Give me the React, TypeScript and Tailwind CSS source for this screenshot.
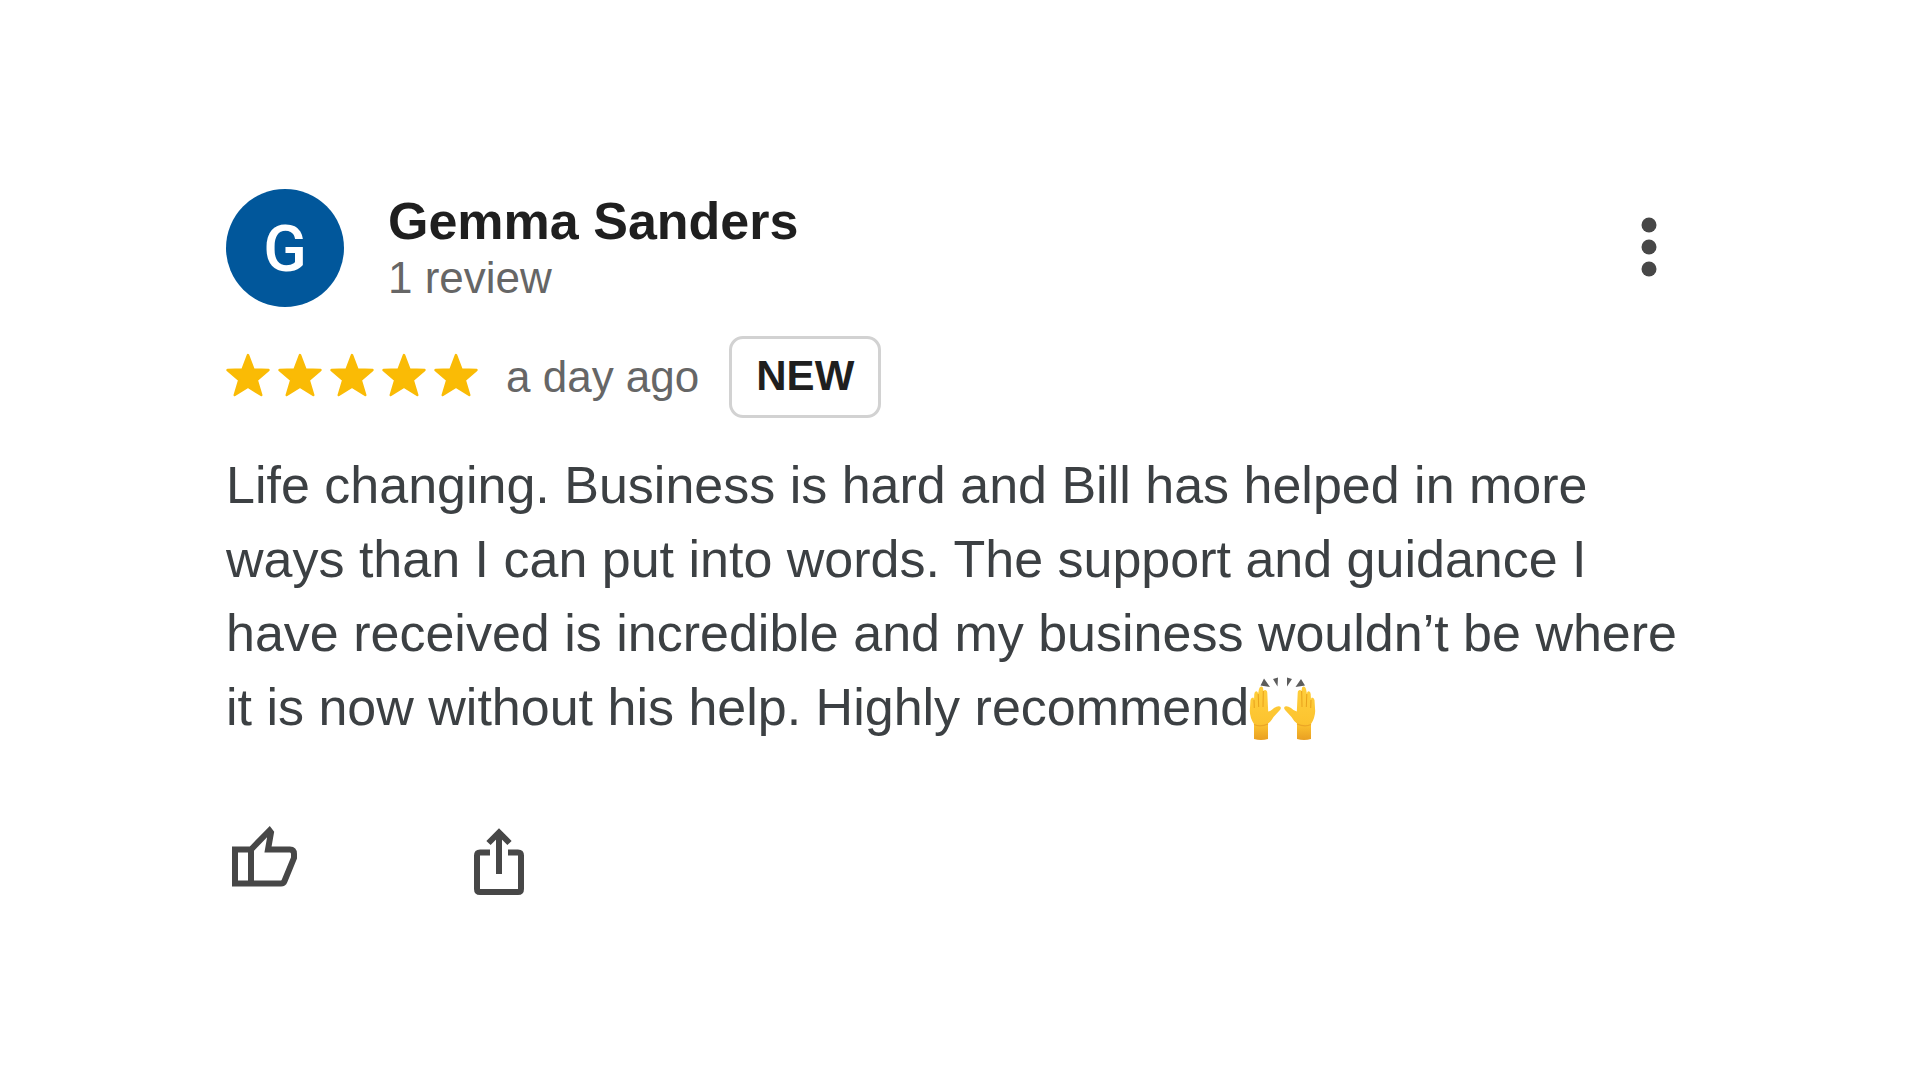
const Star = () => (
  <svg viewBox="0 0 44 44" className="h-11 w-11 fill-[#fabb05]" aria-hidden="true">
    <path
      d="M22 2L27.500 16.500L42.500 17L30.800 27L35.300 42L22 33.800L8.700 42L13.200 27L1.500 17L16.500 16.500Z"
      stroke="#fabb05"
      strokeWidth="2.400"
      strokeLinejoin="round"
    />
  </svg>
);

const Hand = () => (
  <>
    <path
      d="M5 62V47Q1 41 .8 34L1.500 23Q2 20.500 4 20.500Q5.200 20.500 5 23L5.300 17Q5.600 14 7.500 14.200Q9.200 14.500 9 17L10 12Q10.600 9.200 12.500 9.400Q14.300 9.700 14.200 12L14.400 14Q15.500 12.500 17 13.200Q18.400 14 18.300 16L19.200 34.500Q22 34 25 31Q28.500 28.700 31 29.500Q33 31 30.500 33.500L24.500 40Q22 44.500 19 46.500V62Q12 64 5 62Z"
      fill="url(#skin)"
    />
    <path d="M5 23L5.300 31M9.200 17L9.700 30M14.300 14L14 30" stroke="#e9a21b" strokeWidth="1" fill="none" />
    <path d="M5 47.500Q11 50.500 19 47" stroke="#eba626" strokeWidth="1.200" fill="none" />
  </>
);

const RaisedHands = () => (
  <svg viewBox="0 0 68 64" role="img" aria-label="Raising hands" className="inline-block h-16 w-[68px] align-[-16px]">
    <defs>
      <linearGradient id="skin" x1="0" y1="0" x2="0" y2="1">
        <stop offset="0" stopColor="#ffcf3d" />
        <stop offset=".7" stopColor="#fcc32f" />
        <stop offset="1" stopColor="#e99f22" />
      </linearGradient>
    </defs>
    <Hand />
    <g transform="translate(67 0) scale(-1 1)"><Hand /></g>
    <path d="M15 1.500L21 10L11.500 8.500ZM24 2L29 .500L28.500 9.500ZM38 .500L43 2L38 9.500ZM52 2L56 8.500L46.500 10Z" fill="#5c5c5c" />
  </svg>
);

export default function App() {
  return (
    <main className="min-h-screen bg-white px-[226px] pt-[189px] pb-20 font-['Liberation_Sans',Arial,sans-serif]">
      <article>
        <header className="flex items-center">
          <div className="flex size-[118px] items-center justify-center rounded-full bg-[#01579b] pt-1 font-['Roboto',sans-serif] text-[64px] font-medium text-white">G</div>
          <div className="ml-11 flex-1">
            <h1 className="text-[52px] leading-[60px] font-bold text-[#1f1f1f]">Gemma Sanders</h1>
            <p className="text-[44px] leading-[54px] text-[#666]">1 review</p>
          </div>
          <button aria-label="More options" className="mr-[37px] pb-0.5">
            <svg viewBox="0 0 16 60" className="h-[60px] w-4 fill-[#474747]">
              <circle cx="8" cy="8" r="7.500" />
              <circle cx="8" cy="30" r="7.500" />
              <circle cx="8" cy="52" r="7.500" />
            </svg>
          </button>
        </header>
        <div className="mt-[29px] flex items-center">
          <div role="img" aria-label="5 stars" className="flex gap-2 pb-1">
            <Star /><Star /><Star /><Star /><Star />
          </div>
          <span className="ml-7 text-[44px] text-[#666]">a day ago</span>
          <span className="ml-[30px] flex h-[82px] items-center rounded-[14px] border-[3px] border-[#d2d2d2] px-6 pb-1 text-[42px] font-bold text-[#1f1f1f]">NEW</span>
        </div>
        <p className="mt-[30px] text-[52px] leading-[74px] text-[#3c4043]">
          Life changing. Business is hard and Bill has helped in more<br />
          ways than I can put into words. The support and guidance I<br />
          have received is incredible and my business wouldn’t be where<br />
          it is now without his help. Highly recommend<RaisedHands />
        </p>
        <footer className="mt-20 flex items-center gap-[176px] px-1.5">
          <button aria-label="Like">
            <svg viewBox="0 0 66 72" className="h-[72px] w-[66px]" fill="none" stroke="#474747" strokeWidth="6">
              <path d="M3 25.500H19L37.500 6.500L39 8.500L36 25.500H58Q62 25.500 62 30V34L52.500 57Q51.500 59.500 49 59.500H3ZM19 25.500V59.500" />
            </svg>
          </button>
          <button aria-label="Share">
            <svg viewBox="0 0 50 72" className="h-[72px] w-[50px]" fill="none" stroke="#474747" strokeWidth="6">
              <path d="M16 28.500H6Q3 28.500 3 31.500V65Q3 68 6 68H44Q47 68 47 65V31.500Q47 28.500 44 28.500H34M25 50V9M14.500 19L25 8.500L35.500 19" />
            </svg>
          </button>
        </footer>
      </article>
    </main>
  );
}
